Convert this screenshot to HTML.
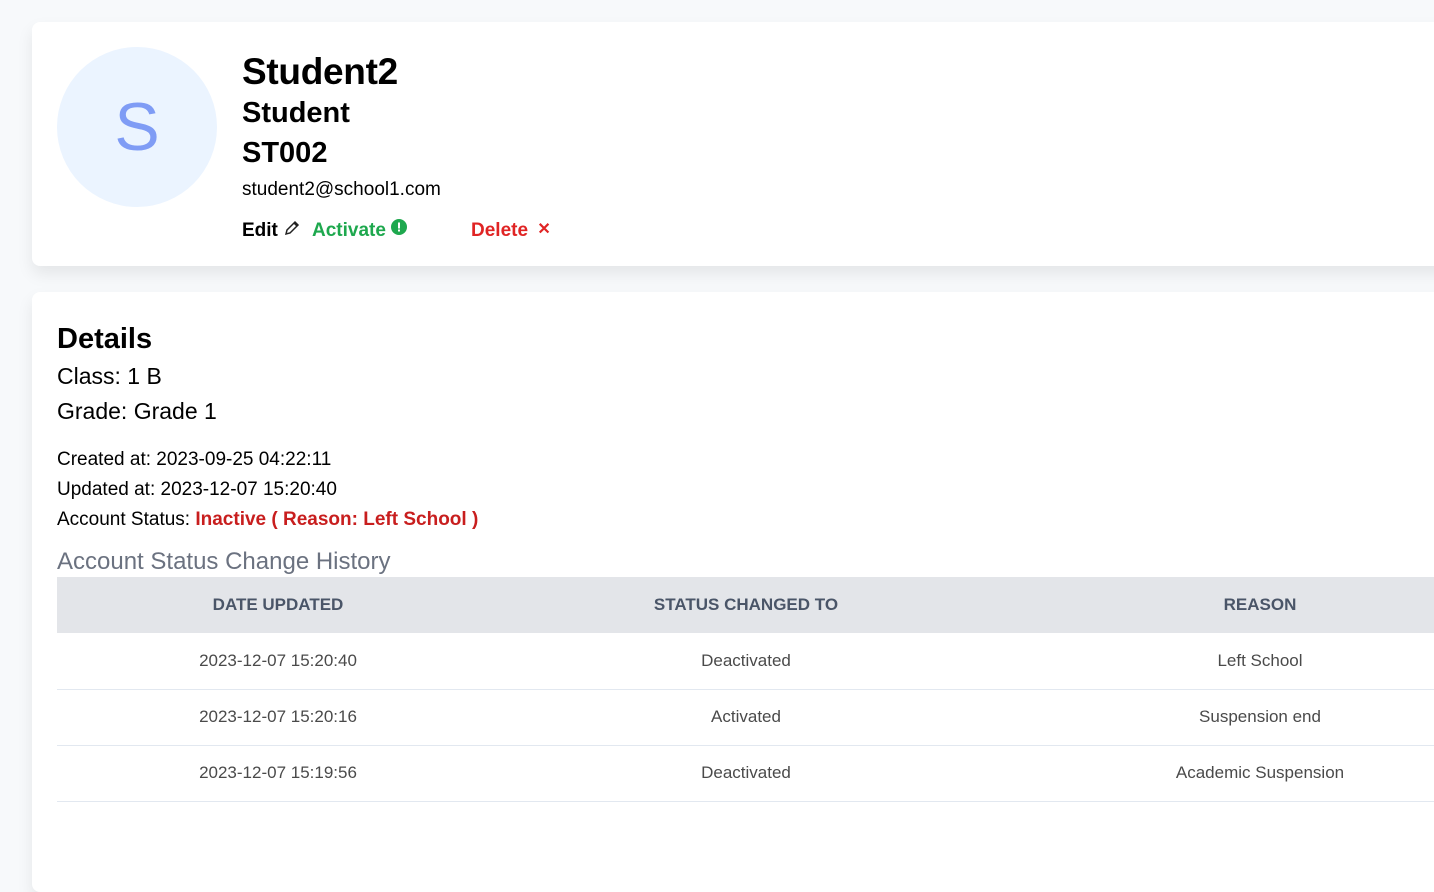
<!DOCTYPE html>
<html><head><style>
*{box-sizing:border-box;margin:0;padding:0}
body{width:1434px;height:865px;overflow:hidden;background:#f7f9fb;font-family:"Liberation Sans",sans-serif;color:#000;position:relative}
.card{position:absolute;left:32px;width:1520px;background:#fff;border-radius:8px;box-shadow:0 8px 16px rgba(0,0,0,0.08)}
.c1{top:22px;height:244px}
.c2{top:292px;height:600px}
.av{position:absolute;left:25px;top:25px;width:160px;height:160px;border-radius:50%;background:#ebf4ff;color:#7f9cf5;font-size:68px;text-align:center;line-height:160px}
.t{position:absolute;left:210px;white-space:nowrap}
table{position:absolute;left:25px;top:285px;width:1470px;border-collapse:collapse;table-layout:fixed}
th{background:#e3e5e9;height:56px;font-size:17px;font-weight:bold;color:#4a5568;text-align:center}
td{height:56px;font-size:17px;color:#4a4a4a;text-align:center;border-bottom:1px solid #e2e8f0}
</style></head><body>
<div class="card c1">
<div class="av">S</div>
<div class="t" style="top:29px;font-size:37px;font-weight:bold;letter-spacing:-0.3px">Student2</div>
<div class="t" style="top:75px;font-size:29px;font-weight:bold">Student</div>
<div class="t" style="top:115px;font-size:29px;font-weight:bold">ST002</div>
<div class="t" style="top:157px;font-size:19px">student2@school1.com</div>
<div class="t" style="top:197px;font-size:19px;font-weight:bold">Edit <svg width="18" height="18" viewBox="0 0 18 18" style="vertical-align:-1px"><path d="M3 15l1-4 8-8 3 3-8 8z M11 4l3 3" fill="none" stroke="#222" stroke-width="1.5"/></svg></div>
<div class="t" style="left:280px;top:197px;font-size:19px;font-weight:bold;color:#1ea84e">Activate <svg width="16" height="16" viewBox="0 0 16 16" style="vertical-align:1px"><circle cx="8" cy="8" r="8" fill="#1ea84e"/><rect x="7" y="3.5" width="2" height="6" fill="#fff"/><rect x="7" y="10.5" width="2" height="2" fill="#fff"/></svg></div>
<div class="t" style="left:439px;top:197px;font-size:19px;font-weight:bold;color:#e02424">Delete <span style="margin-left:4px;font-size:16px;vertical-align:2px">✕</span></div>
</div>
<div class="card c2">
<div class="t" style="left:25px;top:31px;font-size:29px;font-weight:bold">Details</div>
<div class="t" style="left:25px;top:71px;font-size:23px">Class: 1 B</div>
<div class="t" style="left:25px;top:106px;font-size:23px">Grade: Grade 1</div>
<div class="t" style="left:25px;top:157px;font-size:19px">Created at: 2023-09-25 04:22:11</div>
<div class="t" style="left:25px;top:187px;font-size:19px">Updated at: 2023-12-07 15:20:40</div>
<div class="t" style="left:25px;top:217px;font-size:19px">Account Status: <span style="color:#c81e1e;font-weight:bold">Inactive ( Reason: Left School )</span></div>
<div class="t" style="left:25px;top:256px;font-size:24px;color:#6b7280">Account Status Change History</div>
<table>
<tr><th style="width:442px">DATE UPDATED</th><th style="width:494px">STATUS CHANGED TO</th><th>REASON</th></tr>
<tr><td>2023-12-07 15:20:40</td><td>Deactivated</td><td>Left School</td></tr>
<tr><td>2023-12-07 15:20:16</td><td>Activated</td><td>Suspension end</td></tr>
<tr><td>2023-12-07 15:19:56</td><td>Deactivated</td><td>Academic Suspension</td></tr>
</table>
</div>
</body></html>
